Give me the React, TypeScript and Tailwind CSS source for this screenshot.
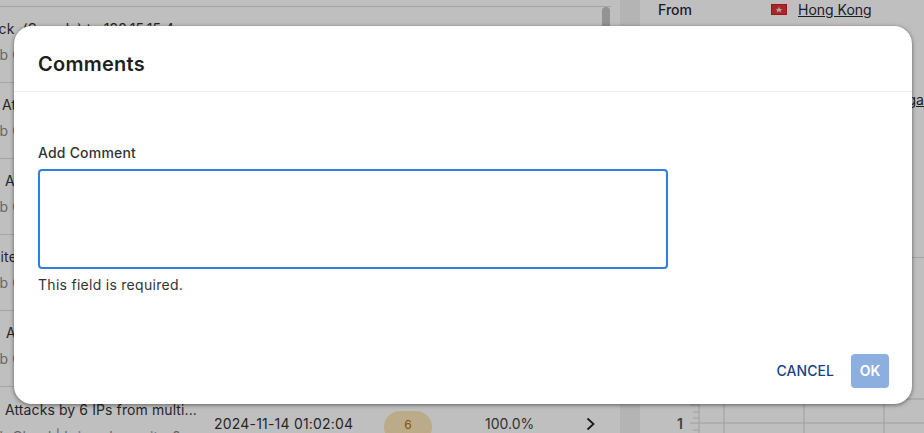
import React from "react";

const rows = [
  { title: "Attack \u00a0(Sample) to 192.15.15.4", cls: "-ml-[28px]" },
  { title: "Attacks on 3 hosts", cls: "ml-[2px]" },
  { title: "Attacks from 4 IPs", cls: "ml-[5px]" },
  { title: "Website Attacks", cls: "-ml-[37px]" },
  { title: "Attacks from 2 IPs", cls: "ml-[6px]" },
];

function Row({ title, cls }: { title: string; cls: string }) {
  return (
    <div className="h-[76px] border-b border-[#dcdcdc] pt-[12px] pr-[10px] shrink-0">
      <div className={`text-sm leading-5 tracking-[0.1px] whitespace-nowrap text-[#333] ${cls}`}>{title}</div>
      <div className="-ml-[22px] mt-[6px] text-sm leading-5 tracking-[0.1px] whitespace-nowrap text-[#8a8a8a]">Web Cloud | kris_url_rewrite_0</div>
    </div>
  );
}

export default function App() {
  return (
    <div className="relative w-[924px] h-[433px] overflow-hidden bg-white [font-family:Inter,'Liberation_Sans',sans-serif]">
      {/* Page behind the dialog */}
      <div className="flex h-full">
        <div className="relative w-[620px] shrink-0 overflow-hidden">
          <div className="w-[611px] flex flex-col">
            <div className="h-[7px] border-b border-[#dcdcdc] shrink-0" />
            {rows.map((r) => (
              <Row key={r.title} {...r} />
            ))}
            <div className="flex h-[76px] pt-[13px] shrink-0">
              <div className="w-[214px] shrink-0">
                <div className="ml-[5px] text-sm leading-5 tracking-[0.1px] whitespace-nowrap text-[#333]">Attacks by 6 IPs from multi...</div>
                <div className="-ml-[22px] mt-[7px] text-sm leading-5 tracking-[0.1px] whitespace-nowrap text-[#8a8a8a]">Web Cloud | kris_url_rewrite_0</div>
              </div>
              <div className="w-[170px] shrink-0 mt-[14px] text-sm leading-5 tracking-[0.2px] text-[#333]">2024-11-14 01:02:04</div>
              <div className="w-[48px] h-[32px] shrink-0 mt-[11px] rounded-full bg-[#fbe5b6] text-center text-xs leading-[28px] text-[#a8701a]">6</div>
              <div className="ml-[53px] w-[47px] shrink-0 mt-[14px] text-sm leading-5 text-[#444]">100.0%</div>
              <svg className="ml-[53px] mt-[17px]" width="12" height="14" viewBox="0 0 12 14" fill="none" stroke="#222" strokeWidth="1.8">
                <path d="M2.5 1.5 8.5 7 2.5 12.5" />
              </svg>
            </div>
          </div>
          <div className="absolute left-[602px] top-[7px] w-[8px] h-[60px] rounded-t-full bg-[#c4c4c4]" />
        </div>
        <div className="w-[20px] shrink-0 bg-[#f0f0f0]" />
        <div className="relative flex-1 overflow-hidden">
          <div className="flex h-[19px] items-center pl-[18px] text-sm text-[#1f2a3a]">
            <span className="w-[113px] font-medium">From</span>
            <svg width="16" height="11" viewBox="0 0 16 11" className="mr-[11px]">
              <rect x="0.5" y="0.5" width="15" height="10" fill="#e0353a" stroke="#d21c22" />
              <path d="M8 2.5 9 5h2.2L9.6 6.4l.6 2.1L8 7.2 5.8 8.5l.6-2.1L4.8 5H7z" fill="#f8d8d8" />
            </svg>
            <span className="underline whitespace-nowrap">Hong Kong</span>
          </div>
          <div className="mt-[71px] ml-[170px] text-sm leading-5 underline whitespace-nowrap text-[#1f2a3a]">Budapest, Hungary</div>
          <div className="mt-[147px] border-t border-[#dcdcdc]" />
          <svg className="absolute left-0 top-[390px]" width="284" height="43" viewBox="0 0 284 43" fill="none">
            <path d="M59 0V43M84 0V43M164 0V43M244 0V43M59 9H284M59 33H284M50 15H59M53 22H59M53 28H59M50 33H59M53 40H59" stroke="#d4d4d4" />
            <text x="37" y="39" fontSize="14" fontWeight="600" fill="#555">1</text>
          </svg>
        </div>
      </div>

      {/* Backdrop */}
      <div className="absolute inset-0 bg-black/25" />

      {/* Dialog */}
      <div className="absolute left-[14px] top-[26px] w-[898px] h-[378px] flex flex-col rounded-[18px] bg-white shadow-[0_1px_4px_rgba(0,0,0,0.5)]">
        <div className="h-[66px] shrink-0 border-b border-[#f0ede8] pl-[24px] pt-[24px] text-xl leading-[28px] tracking-[0.25px] font-semibold text-[#1f1f1f]">Comments</div>
        <div className="flex-1 pl-[24px] pt-[51px]">
          <div className="text-sm leading-5 tracking-[0.2px] font-medium text-[#333]">Add Comment</div>
          <textarea className="block mt-[6px] w-[630px] h-[100px] resize-none rounded-[4px] border-2 border-[#2f7fe0] bg-white outline-none" />
          <div className="mt-[6px] text-sm leading-5 tracking-[0.28px] text-[#333]">This field is required.</div>
        </div>
        <div className="flex items-center justify-end gap-[17px] pr-[23px] pb-[16px]">
          <button className="text-sm leading-5 tracking-[0.05px] font-medium text-[#173f8a]">CANCEL</button>
          <button className="w-[38px] h-[34px] rounded-[4px] bg-[#8cafdf] text-sm font-semibold text-white">OK</button>
        </div>
      </div>
    </div>
  );
}
